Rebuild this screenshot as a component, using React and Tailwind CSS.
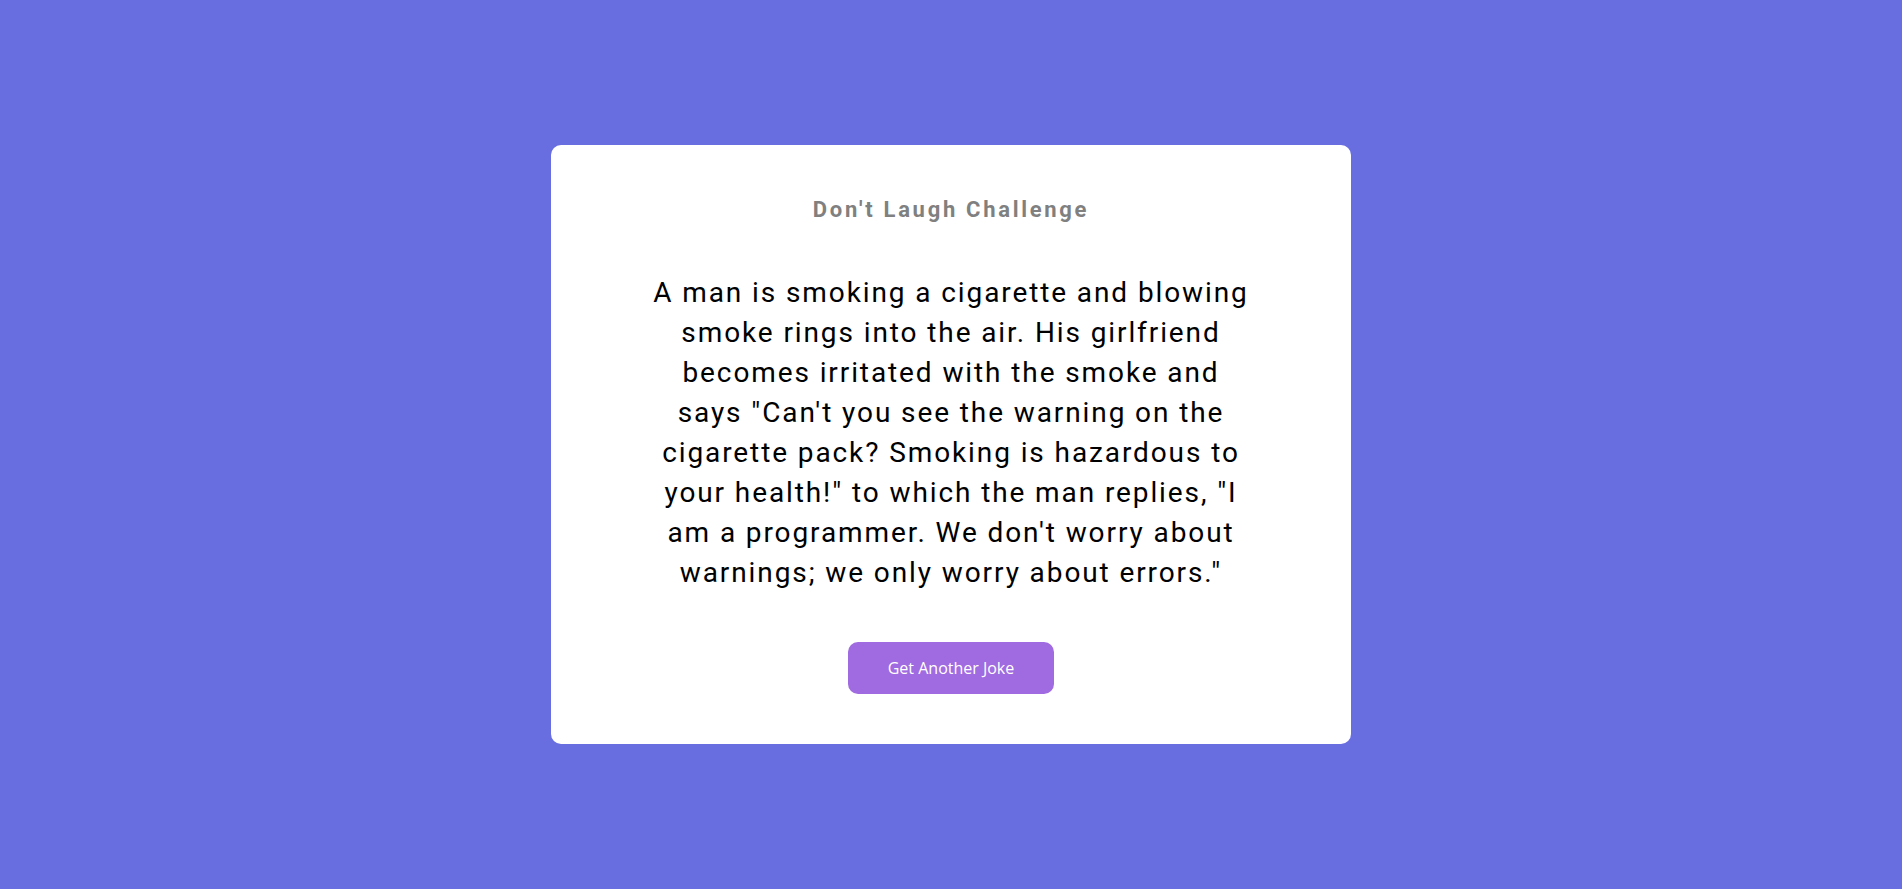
import React from 'react';

const joke =
    'A man is smoking a cigarette and blowing smoke rings into the air. His girlfriend becomes irritated with the smoke and says "Can\'t you see the warning on the cigarette pack? Smoking is hazardous to your health!" to which the man replies, "I am a programmer. We don\'t worry about warnings; we only worry about errors."';

const App = () => {
    return (
        <div className="min-h-screen w-full bg-[#686de0] flex items-center justify-center">
            <div className="w-[800px] bg-white rounded-[10px] px-[100px] pt-[51px] pb-[50px] flex flex-col items-center text-center">
                <h3 className="font-['Roboto',sans-serif] font-bold text-[22px] tracking-[2.7px] text-[#808080] leading-[28px]">
                    Don't Laugh Challenge
                </h3>
                <p className="mt-[49px] font-['Roboto',sans-serif] text-[28px] leading-[40px] tracking-[1.9px] text-black max-w-[600px]">
                    {joke}
                </p>
                <button className="mt-[49px] font-['Open_Sans',sans-serif] text-[16px] text-white bg-[#a06ae0] rounded-[10px] px-10 py-[14px]">
                    Get Another Joke
                </button>
            </div>
        </div>
    );
};

export default App;
